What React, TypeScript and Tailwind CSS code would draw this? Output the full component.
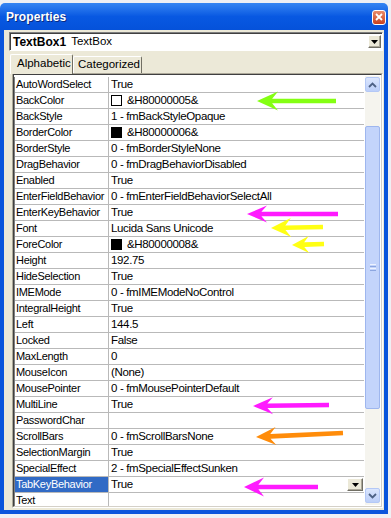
type Row = { name: string; value: string; swatch?: 'white' | 'black'; selected?: boolean }

const rows: Row[] = [
  { name: 'AutoWordSelect', value: 'True' },
  { name: 'BackColor', value: '&H80000005&', swatch: 'white' },
  { name: 'BackStyle', value: '1 - fmBackStyleOpaque' },
  { name: 'BorderColor', value: '&H80000006&', swatch: 'black' },
  { name: 'BorderStyle', value: '0 - fmBorderStyleNone' },
  { name: 'DragBehavior', value: '0 - fmDragBehaviorDisabled' },
  { name: 'Enabled', value: 'True' },
  { name: 'EnterFieldBehavior', value: '0 - fmEnterFieldBehaviorSelectAll' },
  { name: 'EnterKeyBehavior', value: 'True' },
  { name: 'Font', value: 'Lucida Sans Unicode' },
  { name: 'ForeColor', value: '&H80000008&', swatch: 'black' },
  { name: 'Height', value: '192.75' },
  { name: 'HideSelection', value: 'True' },
  { name: 'IMEMode', value: '0 - fmIMEModeNoControl' },
  { name: 'IntegralHeight', value: 'True' },
  { name: 'Left', value: '144.5' },
  { name: 'Locked', value: 'False' },
  { name: 'MaxLength', value: '0' },
  { name: 'MouseIcon', value: '(None)' },
  { name: 'MousePointer', value: '0 - fmMousePointerDefault' },
  { name: 'MultiLine', value: 'True' },
  { name: 'PasswordChar', value: '' },
  { name: 'ScrollBars', value: '0 - fmScrollBarsNone' },
  { name: 'SelectionMargin', value: 'True' },
  { name: 'SpecialEffect', value: '2 - fmSpecialEffectSunken' },
  { name: 'TabKeyBehavior', value: 'True', selected: true },
  { name: 'Text', value: '' },
]

// hand-drawn annotation arrows: tip, tail end, colour
const arrows: { tip: [number, number]; tail: [number, number]; color: string; head?: number; half?: number }[] = [
  { tip: [257, 101], tail: [336, 101], color: '#84ff12', head: 21, half: 9.5 },
  { tip: [247, 214], tail: [338, 214], color: '#ff1aff', head: 20, half: 8.5 },
  { tip: [271, 228], tail: [323, 227], color: '#ffff14', head: 20, half: 9.5 },
  { tip: [292, 245], tail: [324, 244], color: '#ffff14', head: 17, half: 8.5 },
  { tip: [253, 406], tail: [329, 405], color: '#ff1aff', head: 20, half: 8.5 },
  { tip: [256, 437], tail: [343, 433], color: '#ff8c0a', head: 20, half: 9 },
  { tip: [244, 487], tail: [318, 487], color: '#ff1aff', head: 20, half: 9.5 },
]

function arrowPoints(tip: [number, number], tail: [number, number], head: number, half: number) {
  const dx = tail[0] - tip[0]
  const dy = tail[1] - tip[1]
  const len = Math.hypot(dx, dy)
  const ux = dx / len
  const uy = dy / len
  const px = -uy
  const py = ux
  const shaft = 2.3
  const at = (a: number, b: number) => `${tip[0] + ux * a + px * b},${tip[1] + uy * a + py * b}`
  return [
    at(0, 0),
    at(head, -half),
    at(head * 0.72, -shaft),
    at(len, -shaft),
    at(len, shaft),
    at(head * 0.72, shaft),
    at(head, half),
  ].join(' ')
}

function Chevron({ up }: { up?: boolean }) {
  return (
    <svg viewBox="0 0 9 6" className="w-[9px] h-[6px]">
      <path
        d={up ? 'M1 5 L4.5 1.5 L8 5' : 'M1 1 L4.5 4.5 L8 1'}
        stroke="#4d6185"
        strokeWidth="1.8"
        fill="none"
      />
    </svg>
  )
}

function DropButton({ className }: { className: string }) {
  return (
    <div
      className={`flex items-center justify-center bg-[#ece9d8] border-t border-l border-white border-r border-b border-r-[#716f64] border-b-[#716f64] shadow-[inset_-1px_-1px_0_#aca899] ${className}`}
    >
      <svg viewBox="0 0 7 4" className="w-[7px] h-[4px]">
        <path d="M0 0 H7 L3.5 4 Z" fill="#000" />
      </svg>
    </div>
  )
}

export default function App() {
  return (
    <div className="relative w-[391px] h-[518px] overflow-hidden bg-[#eef0f4] pt-[3px] font-['Liberation_Sans',Arial,sans-serif] text-[11px] text-black">
      <div className="flex flex-col w-[388px] h-[511px]">
        {/* Title bar */}
        <div className="shrink-0 flex items-center h-[27px] pl-[6px] pr-[2px] rounded-t-[5px] bg-linear-to-b from-[#3585f2] via-[#0858e2] to-[#0552da]">
          <span className="text-[12px] font-bold text-white tracking-[0.1px] [text-shadow:1px_1px_0_#0a2a80]">
            Properties
          </span>
          <div className="ml-auto mt-[1px] w-[14px] h-[15px] rounded-[3px] border border-white bg-linear-to-b from-[#e88a6a] to-[#c8401c] flex items-center justify-center">
            <svg viewBox="0 0 8 8" className="w-[8px] h-[8px]">
              <path d="M1 1 L7 7 M7 1 L1 7" stroke="white" strokeWidth="1.8" />
            </svg>
          </div>
        </div>

        {/* Body */}
        <div className="flex-1 min-h-0 flex flex-col border-l-[4px] border-r-[4px] border-b-[4px] border-[#0a55dc] bg-[#ece9d8] pt-[2px] pb-[2px] pr-[1px]">
          {/* Object combo */}
          <div className="shrink-0 ml-[5px] h-[19px] flex items-center bg-white border-t border-l border-[#7f7f7f] border-b border-r border-b-white border-r-white shadow-[inset_1px_1px_0_#404040]">
            <span className="ml-[3px] text-[12px] font-bold">TextBox1</span>
            <span className="ml-[5px] text-[11.5px]">TextBox</span>
            <DropButton className="ml-auto mr-[1px] w-[13px] h-[13px]" />
          </div>

          {/* Tabs */}
          <div className="shrink-0 flex items-end h-[22px] ml-[6px]">
            <div className="h-[20px] w-[63px] flex items-center pl-[6px] pb-[2px] border-t border-l border-white border-r border-r-[#716f64] rounded-t-[2px] relative z-10 -mb-[1px] bg-[#ece9d8] text-[11.5px]">
              Alphabetic
            </div>
            <div className="h-[17px] w-[69px] flex items-center pl-[4px] border-t border-l border-white border-r border-r-[#716f64] rounded-t-[2px] text-[11.5px]">
              Categorized
            </div>
          </div>

          {/* Property grid */}
          <div className="ml-[8px] flex-1 min-h-0 flex border-t border-l border-[#aca899] border-b border-r border-b-white border-r-white">
            <div className="flex-1 min-h-0 flex bg-white border-t border-l border-[#404040] border-b border-r border-b-[#d4d0c8] border-r-[#d4d0c8]">
              <div className="flex-1 min-w-0 pt-[2px] overflow-hidden">
                <div className="border-l border-[#808080]">
                  {rows.map((r) => (
                    <div key={r.name} className="flex h-[16px] border-b border-[#b9b9b9]">
                      <div
                        className={`w-[94px] shrink-0 pl-[1px] flex items-center whitespace-nowrap border-r border-[#b9b9b9] text-[11px] tracking-[-0.3px] ${
                          r.selected ? 'bg-[#316ac5] text-white' : ''
                        }`}
                      >
                        {r.name}
                      </div>
                      <div className="flex-1 min-w-0 pl-[2px] flex items-center whitespace-nowrap text-[11.5px] tracking-[-0.35px]">
                        {r.swatch && (
                          <span
                            className={`w-[11px] h-[11px] mr-[5px] border border-black ${
                              r.swatch === 'black' ? 'bg-black' : 'bg-white'
                            }`}
                          />
                        )}
                        {r.value}
                        {r.selected && <DropButton className="ml-auto mr-[1px] w-[16px] h-[13px]" />}
                      </div>
                    </div>
                  ))}
                </div>
              </div>

              {/* Scrollbar */}
              <div className="w-[15px] ml-[1px] mr-[1px] my-[1px] flex flex-col bg-[#f5f4ee]">
                <div className="shrink-0 h-[15px] mt-[1px] rounded-[2px] border border-[#b4c8f6] bg-linear-to-b from-[#dbe6fd] to-[#bccff9] flex items-center justify-center">
                  <Chevron up />
                </div>
                <div className="shrink-0 h-[34px]" />
                <div className="shrink-0 h-[283px] rounded-[2px] border border-[#9eb6ee] bg-[#c3d4fb] flex flex-col items-center justify-center gap-[1px]">
                  <div className="w-[6px] h-[1px] bg-[#eef3fe]" />
                  <div className="w-[6px] h-[1px] bg-[#8ca6e0]" />
                  <div className="w-[6px] h-[1px] bg-[#eef3fe]" />
                  <div className="w-[6px] h-[1px] bg-[#8ca6e0]" />
                </div>
                <div className="flex-1" />
                <div className="shrink-0 h-[15px] mb-[2px] rounded-[2px] border border-[#b4c8f6] bg-linear-to-b from-[#dbe6fd] to-[#bccff9] flex items-center justify-center">
                  <Chevron />
                </div>
              </div>
            </div>
          </div>
        </div>
      </div>

      {/* Annotation arrows drawn over the screenshot */}
      <svg className="absolute inset-0 pointer-events-none" width={391} height={518} viewBox="0 0 391 518">
        {arrows.map((a, i) => (
          <polygon key={i} points={arrowPoints(a.tip, a.tail, a.head ?? 20, a.half ?? 9)} fill={a.color} />
        ))}
      </svg>
    </div>
  )
}
